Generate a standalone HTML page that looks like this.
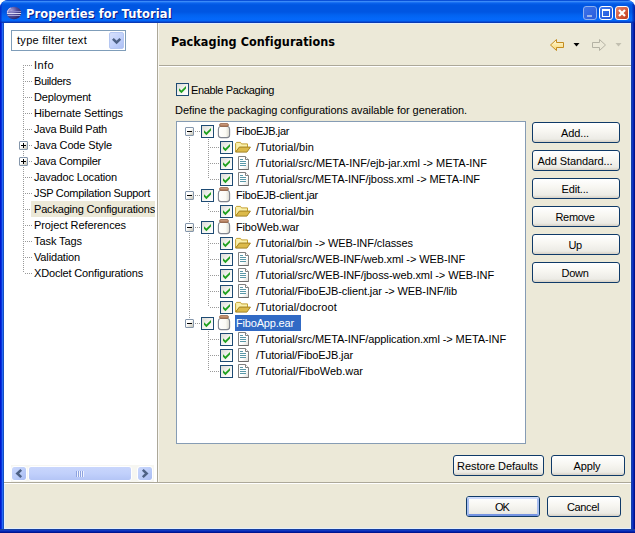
<!DOCTYPE html>
<html lang="en"><head><meta charset="utf-8"><title>Properties for Tutorial</title>
<style>
html,body{margin:0;padding:0;background:#fff;}
body{width:635px;height:533px;overflow:hidden;position:relative;font-family:"Liberation Sans",sans-serif;font-size:11px;color:#000;}
.win{position:absolute;left:0;top:0;width:635px;height:533px;background:#0046d5;border-radius:8px 8px 0 0;overflow:hidden;
 }
.tbar{position:absolute;left:0;top:0;width:635px;height:23px;border-radius:8px 8px 0 0;
 background:linear-gradient(180deg,#0a50d8 0px,#0a50d8 0.5px,#3a8af8 1.5px,#1a70f2 2.5px,#0860ea 3.5px,#0056e2 5px,#0056e2 12px,#0262f0 15px,#0468fa 19px,#0466f6 20.5px,#0550dc 21.5px,#0a3ab4 22.5px,#0a3ab4 23px);}
.ttl{position:absolute;left:26px;top:6px;font-family:"DejaVu Sans","Liberation Sans",sans-serif;font-weight:bold;font-size:11.5px;letter-spacing:0.08px;line-height:16px;color:#fff;text-shadow:1px 1px 0 #0a1883;white-space:nowrap;}
.tb{position:absolute;top:6px;width:14px;height:14px;border:1px solid #fff;border-radius:3px;box-sizing:border-box;}
.client{position:absolute;left:4px;top:23px;width:627px;height:506px;background:#ece9d8;}
.lpane{position:absolute;left:4px;top:23px;width:153px;height:459px;background:#fff;}
.abs{position:absolute;}
.filter{position:absolute;left:11px;top:30px;width:115px;height:21px;box-sizing:border-box;border:1px solid #7f9db9;background:#fff;}
.filter>span{position:absolute;left:5px;top:2px;line-height:15px;white-space:nowrap;}
.ddb{position:absolute;left:109px;top:32px;width:15px;height:17px;box-sizing:border-box;border:1px solid #b5c7f2;border-radius:2px;background:linear-gradient(135deg,#d6e0fc 0%,#c3d2fb 50%,#adc0f5 100%);}
.ltree{position:absolute;left:0;top:0;width:155px;height:482px;overflow:hidden;}
.lt{position:absolute;left:32px;height:16px;line-height:16px;padding:0 2px 0 2px;white-space:nowrap;}
.lt.sel{background:#ece9d8;padding-right:20px;padding-left:3px;margin-left:-1px}
.vdot{position:absolute;width:1px;background-image:linear-gradient(#999 50%,transparent 50%);background-size:1px 2px;}
.hdot{position:absolute;height:1px;background-image:linear-gradient(90deg,#999 50%,transparent 50%);background-size:2px 1px;}
.exp{position:absolute;width:9px;height:9px;box-sizing:border-box;border:1px solid #8496ab;border-radius:1px;background:linear-gradient(135deg,#fff 0%,#fff 40%,#c6c3b3 100%);}
.exp i{position:absolute;left:1px;top:3px;width:5px;height:1px;background:#000;}
.exp b{position:absolute;left:3px;top:1px;width:1px;height:5px;background:#000;}
.rtree{position:absolute;left:176px;top:121px;width:350px;height:323px;box-sizing:border-box;border:1px solid #869cb4;background:#fff;overflow:hidden;}
.rt{position:absolute;height:16px;line-height:16px;padding:0 2px;white-space:nowrap;}
.rt.sel{background:#316ac5;color:#fff;margin-left:1px;padding:0 7px 0 1px;}
.cb{position:absolute;width:13px;height:13px;box-sizing:border-box;border:1px solid #1d4a73;background:linear-gradient(135deg,#dcdcd7 0%,#f3f3ef 50%,#fff 100%);}
.cb svg{position:absolute;left:-1px;top:-1px;}
.ic{position:absolute;}
.btn{position:absolute;padding-right:2px;height:21px;box-sizing:border-box;border:1px solid #0f3a68;border-radius:3px;background:linear-gradient(180deg,#fff 0%,#f7f6f1 45%,#ecebe5 85%,#d6d0c5 100%);text-align:center;line-height:20px;white-space:nowrap;}
.btn.def::before{content:"";position:absolute;left:0;top:0;right:0;bottom:0;border:2px solid;border-color:#cddafb #a9bff1 #7594e2 #a9bff1;border-radius:2px;}
.sepg{position:absolute;height:1px;background:#aca899;}
.sepw{position:absolute;height:1px;background:#fff;}
.h1{position:absolute;letter-spacing:0.06px;left:171px;top:34px;font-family:"DejaVu Sans Condensed","Liberation Sans",sans-serif;font-weight:bold;font-size:12.5px;line-height:16px;white-space:nowrap;}
.lbl{position:absolute;line-height:14px;white-space:nowrap;}
.sb{position:absolute;left:11px;top:465px;width:143px;height:17px;background:#f6f6f1;}
.sbb{position:absolute;top:466px;width:16px;height:15px;box-sizing:border-box;border:1px solid #fff;border-radius:3px;background:linear-gradient(135deg,#cad7fc 0%,#bccdf9 50%,#a9bcf3 100%);background-clip:padding-box;}
.thumb{position:absolute;left:28px;top:466px;width:104px;height:15px;box-sizing:border-box;border:1px solid #fff;border-radius:3px;background:linear-gradient(180deg,#c9d6fc 0%,#c1d0fb 50%,#b4c5f6 100%);}

.fl{position:absolute;left:0;top:23px;width:4px;height:510px;background:linear-gradient(90deg,#0019cf 0,#0019cf 1px,#0a34dc 1px,#0a34dc 2px,#2468f5 2px,#2468f5 3px,#1450c4 3px);}
.fr{position:absolute;left:631px;top:23px;width:4px;height:510px;background:linear-gradient(90deg,#1840a8 0,#1840a8 1px,#1038c0 1px,#1038c0 2px,#0820b0 2px,#0820b0 3px,#00128c 3px);}
.fb{position:absolute;left:0;top:529px;width:635px;height:4px;background:linear-gradient(180deg,#1840a0 0,#1840a0 1px,#1038c0 1px,#1038c0 2px,#0424b0 2px,#0424b0 3px,#001490 3px);}

</style></head>
<body>
<svg width="0" height="0" style="position:absolute">
<defs>
<g id="chk"><path d="M3 5.2 L5.4 7.6 L10 3 L10 5.6 L5.4 10.2 L3 7.8 Z" fill="#21a121"/></g>
<linearGradient id="jg" x1="0" y1="0" x2="1" y2="0"><stop offset="0" stop-color="#fff"/><stop offset="0.65" stop-color="#fbfaf4"/><stop offset="1" stop-color="#d8d6cc"/></linearGradient>
<linearGradient id="lg" x1="0" y1="0" x2="0" y2="1"><stop offset="0" stop-color="#dcae94"/><stop offset="1" stop-color="#a8704c"/></linearGradient>
<g id="jar">
 <path d="M4 3.5 C2.6 4 2.4 5 2.4 6.5 L2.4 12 C2.4 14 3.4 14.6 5 14.6 L11 14.6 C12.6 14.6 13.6 14 13.6 12 L13.6 6.5 C13.6 5 13.4 4 12 3.5 Z" fill="url(#jg)" stroke="#80848e" stroke-width="1.1"/>
 <rect x="3.6" y="0.6" width="8.8" height="2.8" rx="1.3" fill="url(#lg)" stroke="#9a6a4c" stroke-width="0.9"/>
</g>
<g id="folder" transform="translate(0,0.4)">
 <path d="M0.6 12.5 L0.6 4 L1.5 3 L5.5 3 L6.5 4.5 L12.5 4.5 L12.5 8 L4.5 8 Z" fill="#faf0ac" stroke="#c4a030" stroke-width="1" stroke-linejoin="round"/>
 <path d="M0.7 12.7 L4.3 7.7 L15.4 7.7 L11.9 12.7 Z" fill="#dcba4a" stroke="#a48424" stroke-width="1" stroke-linejoin="round"/>
</g>
<linearGradient id="fg" x1="0" y1="0" x2="1" y2="1"><stop offset="0" stop-color="#fff"/><stop offset="0.6" stop-color="#fff"/><stop offset="1" stop-color="#dddcd6"/></linearGradient>
<g id="file">
 <path d="M3.5 1.5 L10.5 1.5 L13.5 4.5 L13.5 14.5 L3.5 14.5 Z" fill="url(#fg)" stroke="#808080" stroke-width="1"/>
 <path d="M10.5 1.5 L10.5 4.5 L13.5 4.5" fill="#fff" stroke="#808080" stroke-width="1"/>
 <path d="M3.5 14.5 H13.5" stroke="#6a6a6a" stroke-width="1"/>
 <path d="M5 4.5 H8 M5 6.5 H11 M5 8.5 H11 M5 10.5 H11" stroke="#5a98a8" stroke-width="1"/>
</g>
</defs>
</svg>
<div class="win">
<div class="tbar"></div>
<div class="abs" style="left:0;top:4px;width:2px;height:19px;background:linear-gradient(90deg,rgba(6,30,190,.85),rgba(6,40,200,.25))"></div>
<div class="abs" style="left:632px;top:4px;width:3px;height:19px;background:linear-gradient(90deg,rgba(6,40,190,.2),rgba(0,20,150,.9))"></div>
<svg class="abs" style="left:6px;top:6px" width="16" height="14" viewBox="0 0 16 14">
 <defs><radialGradient id="eg" cx="0.3" cy="0.3" r="0.85"><stop offset="0" stop-color="#a9a3dc"/><stop offset="0.45" stop-color="#55509e"/><stop offset="1" stop-color="#23205e"/></radialGradient>
 <clipPath id="ec"><ellipse cx="8" cy="7" rx="7.2" ry="6.2"/></clipPath></defs>
 <ellipse cx="8" cy="7" rx="7.2" ry="6.2" fill="url(#eg)"/>
 <g clip-path="url(#ec)"><rect x="0" y="5" width="16" height="1" fill="#8a86c8"/><rect x="0" y="7" width="16" height="1" fill="#dcdaf2"/><rect x="0" y="9" width="16" height="1" fill="#a5a1d6"/>
 <path d="M1.4 6.8 A6.8 6 0 0 1 5 1.6" fill="none" stroke="#c9c4f0" stroke-width="1.2"/></g>
</svg>
<div class="ttl">Properties for Tutorial</div>
<div class="tb" style="left:583px;background:linear-gradient(135deg,#3c73e8,#2a5cdc);border-color:#8fb0f0"><div class="abs" style="left:3px;top:8px;width:5px;height:2px;background:#9db4ea"></div></div>
<div class="tb" style="left:599px;background:linear-gradient(135deg,#3f7bee,#2254d8)"><div class="abs" style="left:2px;top:2px;width:8px;height:8px;box-sizing:border-box;border:1px solid #fff;border-top-width:2px"></div></div>
<div class="tb" style="left:615px;background:linear-gradient(135deg,#e5836a,#c13a1a)"><svg class="abs" style="left:0;top:0" width="12" height="12"><path d="M3 3 L9 9 M9 3 L3 9" stroke="#fff" stroke-width="2.2"/></svg></div>
<div class="client"></div>
<div class="fl"></div><div class="fr"></div><div class="fb"></div>
<div class="lpane"></div>
<div class="abs" style="left:159px;top:23px;width:472px;height:1px;background:#e4effc"></div>
<div class="abs" style="left:4px;top:528px;width:627px;height:1px;background:#e4effc"></div>
<div class="abs" style="left:630px;top:23px;width:1px;height:506px;background:#e4effc"></div>
<div class="abs" style="left:4px;top:484px;width:1px;height:45px;background:#e4effc"></div>
<div class="abs" style="left:157px;top:23px;width:1px;height:459px;background:#aca899"></div>
<div class="abs" style="left:158px;top:23px;width:1px;height:459px;background:#f8f7f1"></div>
<div class="filter"><span><span style="letter-spacing:0.286px">type filter text</span></span></div>
<div class="ddb"><svg class="abs" style="left:0;top:0" width="14" height="15"><path d="M2.9 5.9 L6.6 9.5 L10.3 5.9" fill="none" stroke="#4d6185" stroke-width="2.5"/></svg></div>
<div class="h1">Packaging Configurations</div>
<svg class="abs" style="left:549px;top:38px" width="16" height="14"><defs><linearGradient id="ag" x1="0" y1="0" x2="0" y2="1"><stop offset="0" stop-color="#fffbe0"/><stop offset="1" stop-color="#f8d66c"/></linearGradient></defs><path d="M1.5 7 L7.5 1.5 L7.5 4.5 L14.5 4.5 L14.5 9.5 L7.5 9.5 L7.5 12.5 Z" fill="url(#ag)" stroke="#c48c20" stroke-width="1" stroke-linejoin="round"/></svg>
<svg class="abs" style="left:573px;top:43px" width="7" height="4"><path d="M0.5 0 L6.5 0 L3.5 3.5 Z" fill="#000"/></svg>
<svg class="abs" style="left:591px;top:38px" width="16" height="14"><path d="M14.5 7 L8.5 1.5 L8.5 4.5 L1.5 4.5 L1.5 9.5 L8.5 9.5 L8.5 12.5 Z" fill="#ece9d8" stroke="#b4b2a4" stroke-width="1" stroke-linejoin="round"/></svg>
<svg class="abs" style="left:615px;top:43px" width="7" height="4"><path d="M0.5 0 L6.5 0 L3.5 3.5 Z" fill="#c2bfb0"/></svg>
<div class="sepg" style="left:159px;top:65px;width:472px"></div>
<div class="sepw" style="left:159px;top:66px;width:472px"></div>
<div class="cb" style="left:176px;top:83px"><svg width="13" height="13"><use href="#chk"/></svg></div>
<div class="lbl" style="left:191px;top:83px"><span style="letter-spacing:-0.355px">Enable Packaging</span></div>
<div class="lbl" style="left:175px;top:103px"><span style="letter-spacing:-0.055px">Define the packaging configurations available for generation.</span></div>
<div class="btn" style="left:532px;top:122px;width:88px"><span style="letter-spacing:-0.125px">Add...</span></div>
<div class="btn" style="left:532px;top:150px;width:88px"><span style="letter-spacing:-0.097px">Add Standard...</span></div>
<div class="btn" style="left:532px;top:178px;width:88px"><span style="letter-spacing:-0.161px">Edit...</span></div>
<div class="btn" style="left:532px;top:206px;width:88px"><span style="letter-spacing:-0.328px">Remove</span></div>
<div class="btn" style="left:532px;top:234px;width:88px"><span style="letter-spacing:-0.531px">Up</span></div>
<div class="btn" style="left:532px;top:262px;width:88px"><span style="letter-spacing:-0.281px">Down</span></div>
<div class="btn" style="left:453px;top:455px;width:91px"><span style="letter-spacing:-0.059px">Restore Defaults</span></div>
<div class="btn" style="left:551px;top:455px;width:74px"><span style="letter-spacing:-0.106px">Apply</span></div>
<div class="sepg" style="left:4px;top:482px;width:627px"></div>
<div class="sepw" style="left:4px;top:483px;width:627px"></div>
<div class="btn def" style="left:466px;top:496px;width:74px"><span style="letter-spacing:-0.953px">OK</span></div>
<div class="btn" style="left:547px;top:496px;width:74px"><span style="letter-spacing:-0.375px">Cancel</span></div>
<div class="sb"></div>
<div class="sbb" style="left:11px"><svg class="abs" style="left:0;top:0" width="13" height="13"><path d="M9.2 2.8 L5.3 6.5 L9.2 10.2" fill="none" stroke="#4d6185" stroke-width="2.5"/></svg></div>
<div class="thumb"><div class="abs" style="left:47px;top:4px;width:8px;height:6px;background-image:linear-gradient(90deg,#8ea3e0 50%,#eef2fe 50%);background-size:2px 1px"></div></div>
<div class="sbb" style="left:137px"><svg class="abs" style="left:0;top:0" width="13" height="13"><path d="M4.8 2.8 L8.7 6.5 L4.8 10.2" fill="none" stroke="#4d6185" stroke-width="2.5"/></svg></div>
<div class="ltree">
<div class="vdot" style="left:23px;top:65px;height:208px"></div>
<div class="hdot" style="left:25px;top:65px;width:8px"></div><div class="lt" style="top:57px"><span style="letter-spacing:0.410px">Info</span></div>
<div class="hdot" style="left:25px;top:81px;width:8px"></div><div class="lt" style="top:73px"><span style="letter-spacing:-0.344px">Builders</span></div>
<div class="hdot" style="left:25px;top:97px;width:8px"></div><div class="lt" style="top:89px"><span style="letter-spacing:-0.170px">Deployment</span></div>
<div class="hdot" style="left:25px;top:113px;width:8px"></div><div class="lt" style="top:105px"><span style="letter-spacing:-0.083px">Hibernate Settings</span></div>
<div class="hdot" style="left:25px;top:129px;width:8px"></div><div class="lt" style="top:121px"><span style="letter-spacing:-0.229px">Java Build Path</span></div>
<div class="hdot" style="left:25px;top:145px;width:8px"></div><div class="exp plus" style="left:19px;top:141px"><i></i><b></b></div><div class="lt" style="top:137px"><span style="letter-spacing:-0.141px">Java Code Style</span></div>
<div class="hdot" style="left:25px;top:161px;width:8px"></div><div class="exp plus" style="left:19px;top:157px"><i></i><b></b></div><div class="lt" style="top:153px"><span style="letter-spacing:-0.255px">Java Compiler</span></div>
<div class="hdot" style="left:25px;top:177px;width:8px"></div><div class="lt" style="top:169px"><span style="letter-spacing:-0.164px">Javadoc Location</span></div>
<div class="hdot" style="left:25px;top:193px;width:8px"></div><div class="lt" style="top:185px"><span style="letter-spacing:-0.291px">JSP Compilation Support</span></div>
<div class="hdot" style="left:25px;top:209px;width:8px"></div><div class="lt sel" style="top:201px"><span style="letter-spacing:-0.182px">Packaging Configurations</span></div>
<div class="hdot" style="left:25px;top:225px;width:8px"></div><div class="lt" style="top:217px"><span style="letter-spacing:-0.086px">Project References</span></div>
<div class="hdot" style="left:25px;top:241px;width:8px"></div><div class="lt" style="top:233px"><span style="letter-spacing:-0.080px">Task Tags</span></div>
<div class="hdot" style="left:25px;top:257px;width:8px"></div><div class="lt" style="top:249px"><span style="letter-spacing:-0.150px">Validation</span></div>
<div class="hdot" style="left:25px;top:273px;width:8px"></div><div class="lt" style="top:265px"><span style="letter-spacing:-0.160px">XDoclet Configurations</span></div>
</div>
<div class="rtree">
<div class="vdot" style="left:12px;top:9px;height:192px"></div>
<div class="vdot" style="left:31px;top:17px;height:40px"></div>
<div class="vdot" style="left:31px;top:81px;height:8px"></div>
<div class="vdot" style="left:31px;top:113px;height:72px"></div>
<div class="vdot" style="left:31px;top:209px;height:40px"></div>
<div class="hdot" style="left:18px;top:9px;width:6px"></div><div class="exp minus" style="left:8px;top:5px"><i></i></div><div class="cb" style="left:24px;top:3px"><svg width="13" height="13"><use href="#chk"/></svg></div><svg class="ic" style="left:39px;top:1px" width="16" height="16"><use href="#jar"/></svg><div class="rt" style="left:57px;top:1px"><span style="letter-spacing:-0.351px">FiboEJB.jar</span></div>
<div class="hdot" style="left:33px;top:25px;width:10px"></div><div class="cb" style="left:43px;top:19px"><svg width="13" height="13"><use href="#chk"/></svg></div><svg class="ic" style="left:58px;top:17px" width="16" height="16"><use href="#folder"/></svg><div class="rt" style="left:77px;top:17px"><span style="letter-spacing:0.072px">/Tutorial/bin</span></div>
<div class="hdot" style="left:33px;top:41px;width:10px"></div><div class="cb" style="left:43px;top:35px"><svg width="13" height="13"><use href="#chk"/></svg></div><svg class="ic" style="left:58px;top:33px" width="16" height="16"><use href="#file"/></svg><div class="rt" style="left:77px;top:33px"><span style="letter-spacing:-0.016px">/Tutorial/src/META-INF/ejb-jar.xml -&gt; META-INF</span></div>
<div class="hdot" style="left:33px;top:57px;width:10px"></div><div class="cb" style="left:43px;top:51px"><svg width="13" height="13"><use href="#chk"/></svg></div><svg class="ic" style="left:58px;top:49px" width="16" height="16"><use href="#file"/></svg><div class="rt" style="left:77px;top:49px"><span style="letter-spacing:-0.078px">/Tutorial/src/META-INF/jboss.xml -&gt; META-INF</span></div>
<div class="hdot" style="left:18px;top:73px;width:6px"></div><div class="exp minus" style="left:8px;top:69px"><i></i></div><div class="cb" style="left:24px;top:67px"><svg width="13" height="13"><use href="#chk"/></svg></div><svg class="ic" style="left:39px;top:65px" width="16" height="16"><use href="#jar"/></svg><div class="rt" style="left:57px;top:65px"><span style="letter-spacing:-0.234px">FiboEJB-client.jar</span></div>
<div class="hdot" style="left:33px;top:89px;width:10px"></div><div class="cb" style="left:43px;top:83px"><svg width="13" height="13"><use href="#chk"/></svg></div><svg class="ic" style="left:58px;top:81px" width="16" height="16"><use href="#folder"/></svg><div class="rt" style="left:77px;top:81px"><span style="letter-spacing:0.072px">/Tutorial/bin</span></div>
<div class="hdot" style="left:18px;top:105px;width:6px"></div><div class="exp minus" style="left:8px;top:101px"><i></i></div><div class="cb" style="left:24px;top:99px"><svg width="13" height="13"><use href="#chk"/></svg></div><svg class="ic" style="left:39px;top:97px" width="16" height="16"><use href="#jar"/></svg><div class="rt" style="left:57px;top:97px"><span style="letter-spacing:-0.146px">FiboWeb.war</span></div>
<div class="hdot" style="left:33px;top:121px;width:10px"></div><div class="cb" style="left:43px;top:115px"><svg width="13" height="13"><use href="#chk"/></svg></div><svg class="ic" style="left:58px;top:113px" width="16" height="16"><use href="#folder"/></svg><div class="rt" style="left:77px;top:113px"><span style="letter-spacing:-0.076px">/Tutorial/bin -&gt; WEB-INF/classes</span></div>
<div class="hdot" style="left:33px;top:137px;width:10px"></div><div class="cb" style="left:43px;top:131px"><svg width="13" height="13"><use href="#chk"/></svg></div><svg class="ic" style="left:58px;top:129px" width="16" height="16"><use href="#file"/></svg><div class="rt" style="left:77px;top:129px"><span style="letter-spacing:-0.089px">/Tutorial/src/WEB-INF/web.xml -&gt; WEB-INF</span></div>
<div class="hdot" style="left:33px;top:153px;width:10px"></div><div class="cb" style="left:43px;top:147px"><svg width="13" height="13"><use href="#chk"/></svg></div><svg class="ic" style="left:58px;top:145px" width="16" height="16"><use href="#file"/></svg><div class="rt" style="left:77px;top:145px"><span style="letter-spacing:-0.085px">/Tutorial/src/WEB-INF/jboss-web.xml -&gt; WEB-INF</span></div>
<div class="hdot" style="left:33px;top:169px;width:10px"></div><div class="cb" style="left:43px;top:163px"><svg width="13" height="13"><use href="#chk"/></svg></div><svg class="ic" style="left:58px;top:161px" width="16" height="16"><use href="#file"/></svg><div class="rt" style="left:77px;top:161px"><span style="letter-spacing:-0.100px">/Tutorial/FiboEJB-client.jar -&gt; WEB-INF/lib</span></div>
<div class="hdot" style="left:33px;top:185px;width:10px"></div><div class="cb" style="left:43px;top:179px"><svg width="13" height="13"><use href="#chk"/></svg></div><svg class="ic" style="left:58px;top:177px" width="16" height="16"><use href="#folder"/></svg><div class="rt" style="left:77px;top:177px"><span style="letter-spacing:0.113px">/Tutorial/docroot</span></div>
<div class="hdot" style="left:18px;top:201px;width:6px"></div><div class="exp minus" style="left:8px;top:197px"><i></i></div><div class="cb" style="left:24px;top:195px"><svg width="13" height="13"><use href="#chk"/></svg></div><svg class="ic" style="left:39px;top:193px" width="16" height="16"><use href="#jar"/></svg><div class="rt sel" style="left:57px;top:193px"><span style="letter-spacing:-0.176px">FiboApp.ear</span></div>
<div class="hdot" style="left:33px;top:217px;width:10px"></div><div class="cb" style="left:43px;top:211px"><svg width="13" height="13"><use href="#chk"/></svg></div><svg class="ic" style="left:58px;top:209px" width="16" height="16"><use href="#file"/></svg><div class="rt" style="left:77px;top:209px"><span style="letter-spacing:-0.087px">/Tutorial/src/META-INF/application.xml -&gt; META-INF</span></div>
<div class="hdot" style="left:33px;top:233px;width:10px"></div><div class="cb" style="left:43px;top:227px"><svg width="13" height="13"><use href="#chk"/></svg></div><svg class="ic" style="left:58px;top:225px" width="16" height="16"><use href="#file"/></svg><div class="rt" style="left:77px;top:225px"><span style="letter-spacing:-0.107px">/Tutorial/FiboEJB.jar</span></div>
<div class="hdot" style="left:33px;top:249px;width:10px"></div><div class="cb" style="left:43px;top:243px"><svg width="13" height="13"><use href="#chk"/></svg></div><svg class="ic" style="left:58px;top:241px" width="16" height="16"><use href="#file"/></svg><div class="rt" style="left:77px;top:241px"><span style="letter-spacing:0.001px">/Tutorial/FiboWeb.war</span></div>
</div>
</div>
</body></html>
